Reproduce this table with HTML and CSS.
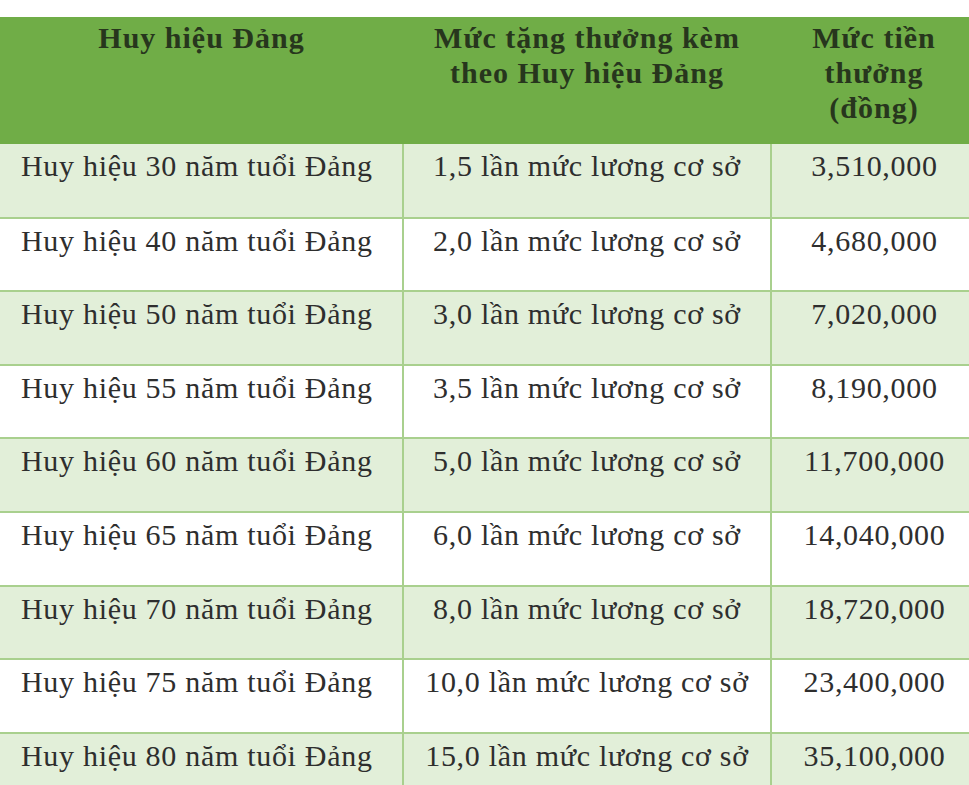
FILE: index.html
```html
<!DOCTYPE html>
<html>
<head>
<meta charset="utf-8">
<link rel="stylesheet" href="styles.css">
</head>
<body>
<div class="page">
<table class="awards">
  <tr class="head">
    <th class="h1">Huy hiệu Đảng</th>
    <th class="h2">Mức tặng thưởng kèm<br>theo Huy hiệu Đảng</th>
    <th class="h3">Mức tiền<br>thưởng<br>(đồng)</th>
  </tr>
  <tr class="odd"><td class="name">Huy hiệu 30 năm tuổi Đảng</td><td class="rate">1,5 lần mức lương cơ sở</td><td class="amt">3,510,000</td></tr>
  <tr class="even"><td class="name">Huy hiệu 40 năm tuổi Đảng</td><td class="rate">2,0 lần mức lương cơ sở</td><td class="amt">4,680,000</td></tr>
  <tr class="odd"><td class="name">Huy hiệu 50 năm tuổi Đảng</td><td class="rate">3,0 lần mức lương cơ sở</td><td class="amt">7,020,000</td></tr>
  <tr class="even"><td class="name">Huy hiệu 55 năm tuổi Đảng</td><td class="rate">3,5 lần mức lương cơ sở</td><td class="amt">8,190,000</td></tr>
  <tr class="odd"><td class="name">Huy hiệu 60 năm tuổi Đảng</td><td class="rate">5,0 lần mức lương cơ sở</td><td class="amt">11,700,000</td></tr>
  <tr class="even"><td class="name">Huy hiệu 65 năm tuổi Đảng</td><td class="rate">6,0 lần mức lương cơ sở</td><td class="amt">14,040,000</td></tr>
  <tr class="odd"><td class="name">Huy hiệu 70 năm tuổi Đảng</td><td class="rate">8,0 lần mức lương cơ sở</td><td class="amt">18,720,000</td></tr>
  <tr class="even"><td class="name">Huy hiệu 75 năm tuổi Đảng</td><td class="rate">10,0 lần mức lương cơ sở</td><td class="amt">23,400,000</td></tr>
  <tr class="odd"><td class="name">Huy hiệu 80 năm tuổi Đảng</td><td class="rate">15,0 lần mức lương cơ sở</td><td class="amt">35,100,000</td></tr>
</table>
</div>
</body>
</html>
```

FILE: styles.css
```css
body {
  margin: 0;
  font-family: "Liberation Serif", serif;
}

.page {
  height: 785px;
  overflow: hidden;
  padding-top: 17px;
  box-sizing: border-box;
}

.awards {
  font-family: "Liberation Serif", serif;
  border-collapse: collapse;
  table-layout: fixed;
  width: 969px;
  color: #2e2e2e;
}

.h1 { width: 403px; }
.h2 { width: 368px; }
.h3 { width: 198px; }

.head th {
  font-family: "Liberation Serif", serif;
  background: #70ad47;
  color: #27361d;
  font-weight: bold;
  font-size: 30px;
  letter-spacing: 1px;
  line-height: 35px;
  height: 127px;
  padding: 3px 4px 0;
  vertical-align: top;
  text-align: center;
  box-sizing: border-box;
}

.head .h3 {
  padding-left: 12px;
}

.odd td,
.even td {
  font-family: "Liberation Serif", serif;
  font-size: 30px;
  letter-spacing: 0.7px;
  line-height: 35px;
  height: 73.6px;
  box-sizing: border-box;
  padding: 4px 4px 0;
  vertical-align: top;
  text-align: center;
  border-bottom: 2px solid #a9d08e;
  border-right: 2px solid #a9d08e;
}

.odd td { background: #e2efd9; }
.even td { background: #ffffff; }

.odd .name,
.even .name {
  text-align: left;
  padding-left: 21px;
}

.odd .amt,
.even .amt {
  padding-left: 12px;
  border-right: none;
}
```
